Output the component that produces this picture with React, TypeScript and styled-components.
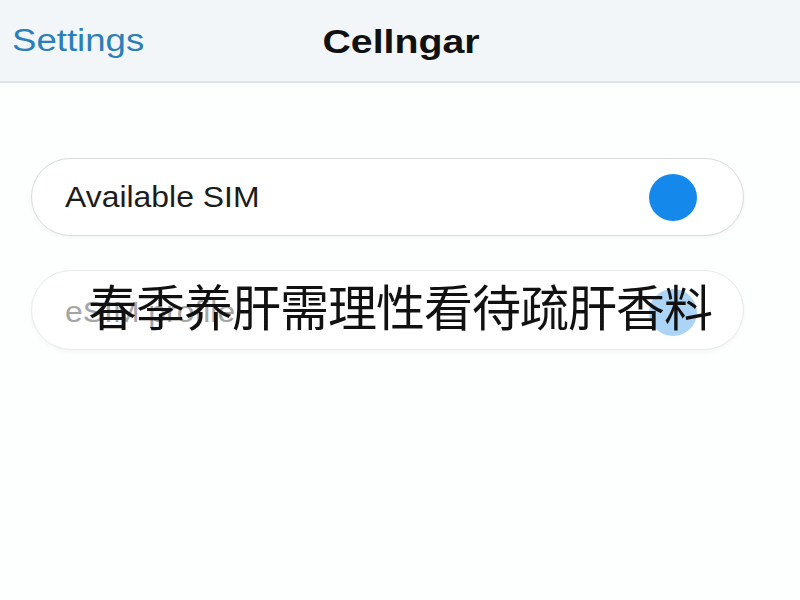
import styled, { createGlobalStyle } from 'styled-components';

const GlobalStyle = createGlobalStyle`
  html, body {
    margin: 0;
    padding: 0;
    background: #fdfefe;
  }
  body {
    font-family: "Liberation Sans", Arial, sans-serif;
  }
`;

export default function App() {
    return (
        <>
            <GlobalStyle />
            <Screen>
                <NavBar>
                    <BackLink>Settings</BackLink>
                    <NavTitle>Cellngar</NavTitle>
                </NavBar>

                <List>
                    <Row>
                        <RowLabel>Available SIM</RowLabel>
                        <Dot />
                    </Row>
                    <Row faded>
                        <RowLabel faded>eSIM profile</RowLabel>
                        <Dot faded />
                    </Row>
                </List>

                {/* subtitle caption burned over the list */}
                <Caption>春季养肝需理性看待疏肝香料</Caption>
            </Screen>
        </>
    );
}

const Screen = styled.div`
    position: relative;
    width: 800px;
    height: 600px;
    overflow: hidden;
    background: #fdfefe;
`;

const NavBar = styled.div`
    position: relative;
    height: 81px;
    display: flex;
    align-items: center;
    justify-content: center;
    background: #f3f6f9;
    border-bottom: 2px solid #dfe3e7;
`;

// the bar's type is a touch wider than stock Arial, so it is stretched a little
const BackLink = styled.span`
    position: absolute;
    left: 12px;
    top: 23px;
    font-size: 31px;
    color: #2b7fb8;
    transform: scaleX(1.18);
    transform-origin: left center;
`;

const NavTitle = styled.span`
    display: inline-block;
    font-size: 33px;
    font-weight: 700;
    color: #111;
    margin-top: 2px;
    margin-left: 2px;
    transform: scaleX(1.19);
`;

const List = styled.div`
    display: flex;
    flex-direction: column;
    gap: 34px;
    padding: 75px 56px 0 31px;
`;

const Row = styled.div<{ faded?: boolean }>`
    height: ${(p) => (p.faded ? '78px' : '76px')};
    display: flex;
    align-items: center;
    justify-content: space-between;
    padding: 0 46px 0 33px;
    border: 1.5px solid ${(p) => (p.faded ? '#e8eaeb' : '#d9dbdc')};
    border-radius: 40px;
    background: #fff;
    box-shadow: 0 2px 4px rgba(0, 0, 0, 0.04);
`;

const RowLabel = styled.span<{ faded?: boolean }>`
    display: inline-block;
    font-size: 29px;
    color: ${(p) => (p.faded ? '#a3a5a7' : '#1c1c1c')};
    margin-top: ${(p) => (p.faded ? '4px' : '0')};
    transform: scaleX(1.1);
    transform-origin: left center;
`;

const Dot = styled.span<{ faded?: boolean }>`
    width: 48px;
    height: 47px;
    border-radius: 50%;
    background: ${(p) => (p.faded ? '#acd4f6' : '#1588ec')};
    margin-top: ${(p) => (p.faded ? '4px' : '0')};
`;

const Caption = styled.div`
    position: absolute;
    left: 0;
    right: 0;
    top: 273px;
    text-align: center;
    font-family: "Noto Sans CJK SC", "Noto Sans", sans-serif;
    font-size: 49px;
    line-height: 64px;
    letter-spacing: -1px;
    color: #111;
`;
